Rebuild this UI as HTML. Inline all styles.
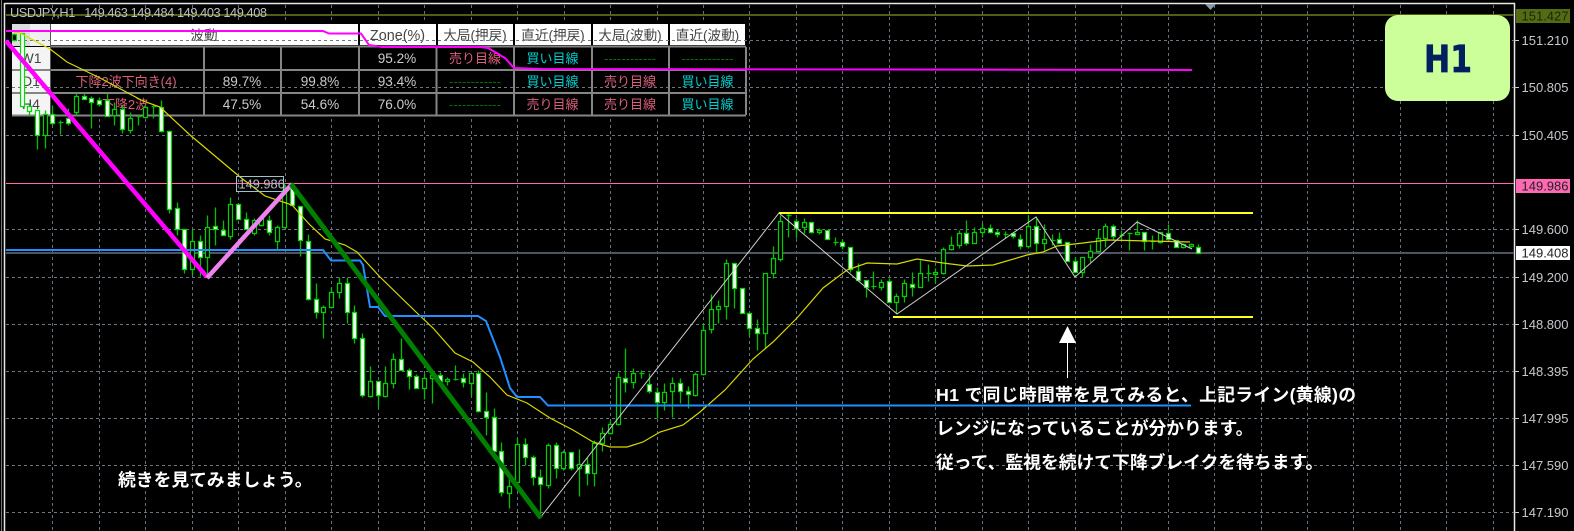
<!DOCTYPE html>
<html lang="ja"><head><meta charset="utf-8"><title>USDJPY H1</title>
<style>
html,body{margin:0;padding:0;background:#000;width:1574px;height:531px;overflow:hidden}
svg{display:block}
text{font-family:"Liberation Sans","Noto Sans CJK JP",sans-serif}
.ax{fill:#c4c8cc;font-size:13px}
.th{fill:#444;font-size:13.6px;text-anchor:middle}
.n{fill:#ccc;font-size:13.6px;text-anchor:middle}
.s{fill:#dc5f7c;font-size:13px;text-anchor:middle}
.b{fill:#00cfcf;font-size:13px;text-anchor:middle}
.d{fill:#007000;font-size:13px;text-anchor:middle}
.a{fill:#fff;font-size:17.8px;font-weight:700}
</style></head><body>
<svg width="1574" height="531" viewBox="0 0 1574 531" xmlns="http://www.w3.org/2000/svg">
<rect width="1574" height="531" fill="#000"/>
<!-- frame -->
<path d="M4.5 3.5H1514.5V531M4.5 3V531" fill="none" stroke="#e8e8e8" stroke-width="1.5"/>
<path d="M1.5 0V531" stroke="#777" stroke-width="1"/>
<!-- vertical grid -->
<path d="M52.5 5V531M99.5 5V531M145.5 5V531M192.5 5V531M238.5 5V531M285.5 5V531M331.5 5V531M378.5 5V531M424.5 5V531M471.5 5V531M517.5 5V531M564.5 5V531M610.5 5V531M657.5 5V531M703.5 5V531M749.5 5V531M796.5 5V531M842.5 5V531M889.5 5V531M935.5 5V531M982.5 5V531M1028.5 5V531M1075.5 5V531M1121.5 5V531M1168.5 5V531M1214.5 5V531M1261.5 5V531M1307.5 5V531M1353.5 5V531M1400.5 5V531M1446.5 5V531M1493.5 5V531" stroke="#64727f" stroke-width="1" stroke-dasharray="3 3" fill="none"/>
<!-- table -->
<rect x="11" y="23" width="736" height="93" fill="#000"/>
<rect x="12" y="24" width="38" height="22" fill="#efefef"/><rect x="12" y="24" width="18" height="22" fill="#ddd"/>
<rect x="12" y="47" width="38" height="68" fill="#f4f4f4"/>
<rect x="51" y="24" width="307" height="21" fill="#fff"/>
<rect x="360" y="24" width="76" height="21" fill="#fff"/><rect x="438" y="24" width="75" height="21" fill="#fff"/><rect x="515" y="24" width="76" height="21" fill="#fff"/><rect x="593" y="24" width="75" height="21" fill="#fff"/><rect x="670" y="24" width="75" height="21" fill="#fff"/>
<path d="M12 70H746M12 93H746M12 115.500H746M50 46.500H746" stroke="#858585" stroke-width="2"/>
<path d="M204 47V115M281 47V115M359 47V115M436.500 47V115M514 47V115M592 47V115M669 47V115M746 47V115" stroke="#858585" stroke-width="2"/>
<path d="M50.500 24V116" stroke="#555" stroke-width="1"/>
<text class="th" x="204" y="40">波動</text>
<text class="th" x="397.500" y="40" style="font-size:14.400px">Zone(%)</text>
<text class="th" x="475" y="40">大局(押戻)</text><text class="th" x="553" y="40">直近(押戻)</text><text class="th" x="630" y="40">大局(波動)</text><text class="th" x="707.500" y="40">直近(波動)</text>
<text class="th" x="31" y="63" style="font-size:14px">W1</text><text class="th" x="31" y="86" style="font-size:14px">D1</text><text class="th" x="31" y="109" style="font-size:14px">H4</text>
<text class="s" x="126" y="86">下降2波下向き(4)</text><text class="s" x="125" y="109">下降2波</text>
<text class="n" x="242" y="86">89.7%</text><text class="n" x="320" y="86">99.8%</text>
<text class="n" x="242" y="109">47.5%</text><text class="n" x="320" y="109">54.6%</text>
<text class="n" x="397" y="63">95.2%</text><text class="n" x="397" y="86">93.4%</text><text class="n" x="397" y="109">76.0%</text>
<text class="s" x="475" y="63">売り目線</text><text class="d" x="475" y="86">------------</text><text class="d" x="475" y="109">------------</text>
<text class="b" x="552.500" y="63">買い目線</text><text class="b" x="552.500" y="86">買い目線</text><text class="s" x="552.500" y="109">売り目線</text>
<text class="d" x="630" y="63">------------</text><text class="s" x="630" y="86">売り目線</text><text class="s" x="630" y="109">売り目線</text>
<text class="d" x="707.500" y="63">------------</text><text class="b" x="707.500" y="86">買い目線</text><text class="b" x="707.500" y="109">買い目線</text>
<!-- horizontal grid -->
<path d="M6 40.500H1514M6 87.500H1514M6 135.500H1514M6 229.500H1514M6 277.500H1514M6 324.500H1514M6 371.500H1514M6 418.500H1514M6 465.500H1514M6 512.500H1514" stroke="#6a7885" stroke-width="1" stroke-dasharray="3 3" fill="none"/>
<!-- axis ticks -->
<path d="M1514 40.500h5M1514 87.500h5M1514 135.500h5M1514 229.500h5M1514 277.500h5M1514 324.500h5M1514 371.500h5M1514 418.500h5M1514 465.500h5M1514 512.500h5" stroke="#ccc"/>
<!-- level lines -->
<rect x="6" y="14" width="1508" height="2" fill="#4f5f14"/>
<rect x="6" y="183" width="1508" height="1" fill="#ff69b4"/>
<rect x="6" y="252" width="1508" height="2" fill="#4d5660"/>
<polygon points="1205,4 1216,4 1210.500,10" fill="#8a9bab"/>
<!-- candles -->
<g transform="translate(.5,.5)">
<path fill="none" stroke="#00c000" stroke-width="1.300" d="M22 33V107M29 104V115M37 109V149M52 105V125M68 108V125M84 93V99M91 96V128M99 97V106M107 93V116M122 105V133M161 100V132M169 131V213M177 202V235M184 229V273M200 235V276M215 207V245M223 220V235M238 204V219M246 212V229M269 215V235M292 182V205M300 206V256M308 234V300M316 283V318M347 277V323M354 305V343M362 333V397M378 381V407M401 338V370M409 368V389M416 374V388M440 372V381M463 373V387M478 370V412M486 392V435M494 408V451M501 442V496M525 438V465M533 455V485M540 469V518M556 442V478M571 452V470M587 457V485M625 348V392M649 373V393M657 387V418M680 378V403M688 386V408M734 263V308M742 288V313M749 313V336M757 319V350M796 218V238M811 222V233M827 230V239M842 239V249M850 247V272M858 263V281M866 280V297M889 278V302M912 272V296M966 220V245M990 224V233M997 229V237M1013 232V238M1020 234V249M1036 218V253M1059 232V243M1067 242V261M1075 257V272M1113 224V240M1144 232V250M1168 224V239M1176 240V247M1198 244V253
M14 33V41M45 110V148M76 93V115M114 102V125M130 112V133M145 105V118M192 229V275M207 215V278M230 197V239M254 218V235M261 215V226M277 225V250M284 183V228M323 305V338M331 287V308M339 277V298M370 366V397M385 366V397M393 353V388M424 373V399M432 370V403M447 377V385M471 373V395M509 478V508M517 438V483M548 443V488M563 450V470M579 449V496M594 440V486M602 427V451M610 420V434M618 372V425M633 368V388M664 383V410M672 377V417M695 372V396M703 323V375M711 294V333M718 300V323M726 259V319M765 273V348M773 246V278M780 215V261M804 218V233M819 228V234M881 279V290M896 293V313M904 279V302M920 260V287M935 268V283M943 247V274M951 236V250M959 230V248M974 227V243M982 223V237M1028 215V248M1044 224V250M1082 257V277M1090 244V262M1098 229V252M1105 223V247M1137 220V234M1160 232V243M1183 243V248M1191 243V247
M60 120V134M138 115V125M153 105V118M455 365V380M641 370V378M788 213V237M835 237V245M873 271V289M928 264V281M1005 231V238M1052 234V245M1121 230V240M1129 232V250M1152 235V249
M58 122h5M136 116h5M151 106h5M453 379h5M639 373h5M786 215h5M833 242h5M871 286h5M926 273h5M1003 234h5M1050 240h5M1119 235h5M1127 233h5M1150 241h5"/>
<path fill="#000" stroke="#00d000" stroke-width="1.200" d="M12 34h4v6h-4zM43 114h4v21h-4zM74 96h4v16h-4zM112 109h4v6h-4zM128 118h4v12h-4zM143 107h4v10h-4zM190 241h4v28h-4zM205 227h4v30h-4zM228 204h4v32h-4zM252 220h4v13h-4zM259 218h4v7h-4zM275 227h4v14h-4zM282 190h4v37h-4zM321 307h4v5h-4zM329 292h4v15h-4zM337 283h4v9h-4zM368 381h4v15h-4zM383 383h4v13h-4zM391 359h4v24h-4zM422 378h4v10h-4zM430 375h4v3h-4zM445 379h4v2h-4zM469 373h4v10h-4zM507 486h4v7h-4zM515 444h4v38h-4zM546 445h4v40h-4zM561 452h4v16h-4zM577 464h4v4h-4zM592 443h4v30h-4zM600 433h4v10h-4zM608 424h4v9h-4zM616 377h4v47h-4zM631 373h4v9h-4zM662 392h4v10h-4zM670 383h4v8h-4zM693 374h4v21h-4zM701 330h4v44h-4zM709 309h4v20h-4zM716 306h4v3h-4zM724 263h4v43h-4zM763 273h4v60h-4zM771 258h4v15h-4zM778 221h4v38h-4zM802 222h4v5h-4zM817 230h4v2h-4zM879 282h4v5h-4zM894 296h4v6h-4zM902 283h4v13h-4zM918 273h4v14h-4zM933 272h4v2h-4zM941 249h4v24h-4zM949 245h4v4h-4zM957 233h4v12h-4zM972 232h4v11h-4zM980 228h4v4h-4zM1026 226h4v20h-4zM1042 239h4v4h-4zM1080 257h4v15h-4zM1088 251h4v6h-4zM1096 238h4v13h-4zM1103 226h4v12h-4zM1135 232h4v2h-4zM1158 232h4v10h-4zM1181 244h4v3h-4zM1189 244h4v2h-4z"/>
<path fill="#fff" stroke="#00e000" stroke-width="1.200" d="M20 33h4v73h-4zM27 106h4v5h-4zM35 110h4v25h-4zM50 114h4v9h-4zM66 118h4v5h-4zM82 96h4v3h-4zM89 98h4v4h-4zM97 100h4v4h-4zM105 100h4v16h-4zM120 109h4v20h-4zM159 107h4v24h-4zM167 131h4v78h-4zM175 208h4v21h-4zM182 229h4v40h-4zM198 241h4v16h-4zM213 226h4v3h-4zM221 230h4v5h-4zM236 204h4v15h-4zM244 219h4v10h-4zM267 220h4v12h-4zM290 188h4v17h-4zM298 206h4v34h-4zM306 241h4v58h-4zM314 299h4v13h-4zM345 283h4v29h-4zM352 312h4v26h-4zM360 338h4v57h-4zM376 381h4v14h-4zM399 359h4v11h-4zM407 370h4v6h-4zM414 376h4v12h-4zM438 375h4v6h-4zM461 378h4v4h-4zM476 373h4v38h-4zM484 411h4v6h-4zM492 417h4v34h-4zM499 451h4v41h-4zM523 444h4v13h-4zM531 457h4v20h-4zM538 477h4v7h-4zM554 445h4v23h-4zM569 452h4v16h-4zM585 464h4v9h-4zM623 378h4v4h-4zM647 384h4v7h-4zM655 392h4v10h-4zM678 383h4v8h-4zM686 391h4v3h-4zM732 263h4v25h-4zM740 288h4v25h-4zM747 313h4v15h-4zM755 328h4v5h-4zM794 221h4v7h-4zM809 222h4v10h-4zM825 230h4v9h-4zM840 242h4v4h-4zM848 247h4v22h-4zM856 271h4v9h-4zM864 280h4v7h-4zM887 281h4v21h-4zM910 284h4v3h-4zM964 233h4v10h-4zM988 228h4v4h-4zM995 232h4v2h-4zM1011 233h4v3h-4zM1018 239h4v7h-4zM1034 226h4v17h-4zM1057 239h4v4h-4zM1065 242h4v19h-4zM1073 261h4v11h-4zM1111 226h4v10h-4zM1142 232h4v9h-4zM1166 233h4v6h-4zM1174 240h4v7h-4zM1196 247h4v6h-4z"/>
</g>
<!-- moving average -->
<polyline fill="none" stroke="#d8d800" stroke-width="1.200" points="10,31 20,33 50,49 67,62 100,78 143,101 160,107 190,135 240,177 265,196 292,205 310,225 325,239 345,245 357,252 380,277 417,313 433,328 455,353 473,362 490,377 507,395 527,403 550,418 573,430 593,442 610,447 627,447 643,442 660,432 683,425 700,412 725,390 753,359 773,342 797,318 823,288 847,270 867,263 897,264 917,259 943,263 967,266 993,265 1027,255 1043,252 1057,246 1083,243 1107,240 1150,241 1190,242"/>
<!-- blue line -->
<polyline fill="none" stroke="#1e90ff" stroke-width="2" points="6,250 323,250 331,260.500 360,260.500 363,265 370,307 378,307 385,316 478,316 486,321 500,357 510,388 517,397 540,397 548,405.500 1191,405.500"/>
<!-- magenta top -->
<polyline fill="none" stroke="#ff00ff" stroke-width="2" points="6,31 323,31 329,33.500 361,33.500 369,45 382,47 480,47 488,48 505,58 514,68 542,69 1192,70"/>
<!-- white zigzag -->
<polyline fill="none" stroke="#cfcfcf" stroke-width="1" points="540,518 779,213 897,314 1036,217 1075,277 1137,222 1192,249"/>
<!-- yellow range -->
<rect x="779" y="212" width="474" height="2" fill="#ffff1a"/>
<rect x="893" y="316" width="360" height="2" fill="#ffff1a"/>
<!-- thick wave -->
<line x1="6" y1="41" x2="207" y2="277" stroke="#ff00ff" stroke-width="4.500"/>
<line x1="207" y1="278" x2="292" y2="184" stroke="#ee82ee" stroke-width="4.500"/>
<line x1="291" y1="184" x2="541" y2="518" stroke="#007f00" stroke-width="5"/>
<!-- price tag on chart -->
<rect x="236.500" y="176.500" width="47" height="15" fill="none" stroke="#9fc0d0"/>
<text x="238.500" y="188.500" style="fill:#b8bcc0;font-size:12.800px">149.986</text>
<!-- H1 badge -->
<rect x="1385" y="15" width="125" height="86" rx="13" fill="#ccff99"/>
<text x="1424" y="72" textLength="48" lengthAdjust="spacingAndGlyphs" stroke="#002060" stroke-width=".7" style="font-family:'DejaVu Sans',sans-serif;font-weight:700;font-size:37px;fill:#002060">H1</text>
<!-- axis -->
<rect x="1516" y="9" width="54" height="14" fill="#556b12"/>
<rect x="1516" y="179" width="54" height="14" fill="#ff69b4"/>
<rect x="1516" y="246" width="54" height="14" fill="#fff"/>
<text class="ax" x="1521.500" y="20.500" style="fill:#1c2410">151.427</text>
<text class="ax" x="1521.500" y="45">151.210</text>
<text class="ax" x="1521.500" y="92">150.805</text>
<text class="ax" x="1521.500" y="140">150.405</text>
<text class="ax" x="1521.500" y="190.500" style="fill:#222">149.986</text>
<text class="ax" x="1521.500" y="234">149.600</text>
<text class="ax" x="1521.500" y="257.500" style="fill:#222">149.408</text>
<text class="ax" x="1521.500" y="282">149.200</text>
<text class="ax" x="1521.500" y="329">148.800</text>
<text class="ax" x="1521.500" y="376">148.395</text>
<text class="ax" x="1521.500" y="423">147.995</text>
<text class="ax" x="1521.500" y="470">147.590</text>
<text class="ax" x="1521.500" y="517">147.190</text>
<!-- header -->
<text x="10" y="17" style="fill:#c0c0c0;font-size:12.800px;white-space:pre" textLength="257">USDJPY,H1   149.463 149.484 149.403 149.408</text>
<!-- arrow -->
<polygon points="1067.500,326 1059,343 1076,343" fill="#fff"/>
<rect x="1067" y="343" width="1" height="35" fill="#fff"/>
<!-- annotations -->
<text class="a" x="936" y="401" textLength="420" style="white-space:pre">H1 で同じ時間帯を見てみると、上記ライン(黄線)の</text>
<text class="a" x="936" y="434.500">レンジになっていることが分かります。</text>
<text class="a" x="936" y="468.500">従って、監視を続けて下降ブレイクを待ちます。</text>
<text class="a" x="118" y="486">続きを見てみましょう。</text>
</svg>
</body></html>
